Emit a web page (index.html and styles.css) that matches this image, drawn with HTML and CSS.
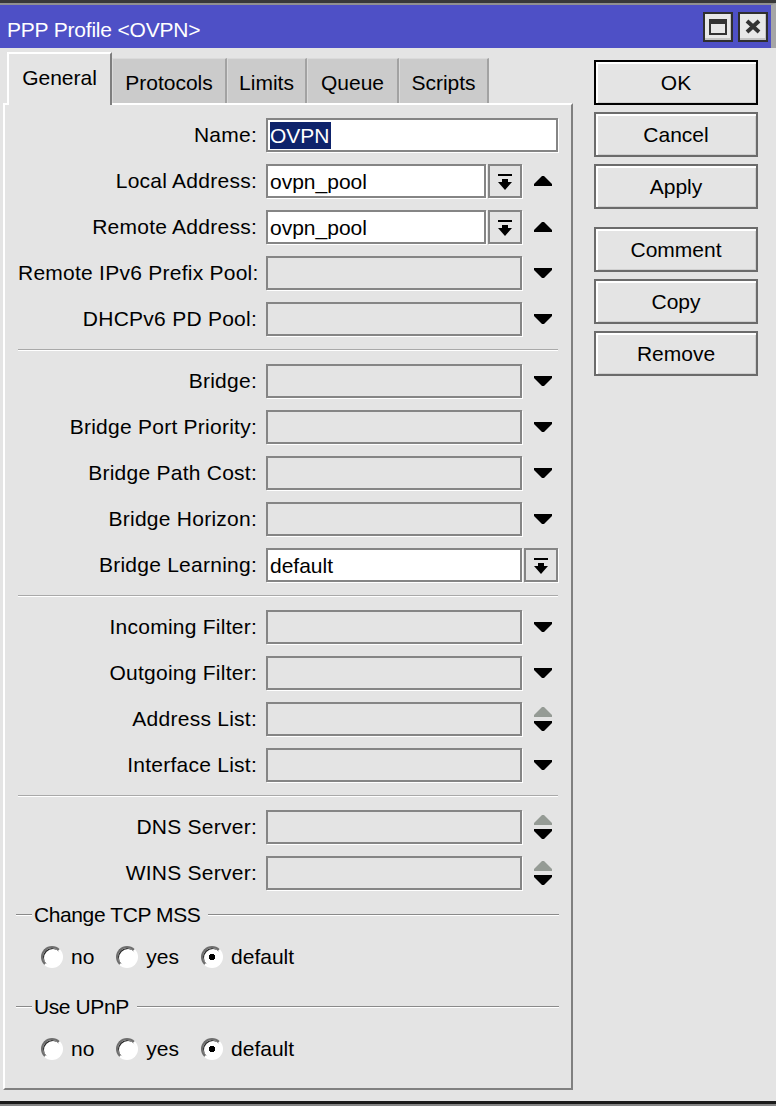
FILE: index.html
```html
<!DOCTYPE html>
<html>
<head>
	<meta charset="utf-8">
	<title>PPP Profile &lt;OVPN&gt;</title>
	<link rel="stylesheet" href="styles.css">
</head>
<body>
<div class="window">
	<div class="titlebar">
		<span class="title">PPP Profile &lt;OVPN&gt;</span>
		<div class="winbtns">
			<span class="winbtn">
				<svg width="18" height="16" viewBox="0 0 18 16"><rect x="1" y="2" width="16" height="13" fill="none" stroke="#333" stroke-width="2"/><rect width="18" height="5" fill="#333"/></svg>
			</span>
			<span class="winbtn">
				<svg width="16" height="15" viewBox="0 0 16 15"><path d="M2 2L14 13M14 2L2 13" stroke="#333" stroke-width="4"/></svg>
			</span>
		</div>
	</div>

	<div class="main">
		<div class="left">
			<div class="tabs">
				<div class="tab active">General</div>
				<div class="tab protocols">Protocols</div>
				<div class="tab limits">Limits</div>
				<div class="tab queue">Queue</div>
				<div class="tab scripts">Scripts</div>
			</div>

			<div class="panel">
				<div class="row">
					<span class="lbl">Name:</span>
					<div class="field on full"><span class="sel">OVPN</span></div>
				</div>
				<div class="row">
					<span class="lbl">Local Address:</span>
					<div class="field on short">ovpn_pool</div>
					<span class="dd"><svg width="14" height="16" viewBox="0 0 14 16"><rect width="14" height="2"/><path d="M4 5h6v3h4l-7 8-7-8h4z"/></svg></span>
					<span class="arrow"><svg width="18" height="10" viewBox="0 0 18 10"><path d="M8 0H10L18 8V10H0V8Z"/></svg></span>
				</div>
				<div class="row">
					<span class="lbl">Remote Address:</span>
					<div class="field on short">ovpn_pool</div>
					<span class="dd"><svg width="14" height="16" viewBox="0 0 14 16"><rect width="14" height="2"/><path d="M4 5h6v3h4l-7 8-7-8h4z"/></svg></span>
					<span class="arrow"><svg width="18" height="10" viewBox="0 0 18 10"><path d="M8 0H10L18 8V10H0V8Z"/></svg></span>
				</div>
				<div class="row">
					<span class="lbl">Remote IPv6 Prefix Pool:</span>
					<div class="field"></div>
					<span class="arrow"><svg width="18" height="10" viewBox="0 0 18 10"><path d="M0 0H18V2L10 10H8L0 2Z"/></svg></span>
				</div>
				<div class="row">
					<span class="lbl">DHCPv6 PD Pool:</span>
					<div class="field"></div>
					<span class="arrow"><svg width="18" height="10" viewBox="0 0 18 10"><path d="M0 0H18V2L10 10H8L0 2Z"/></svg></span>
				</div>

				<div class="sep"></div>

				<div class="row">
					<span class="lbl">Bridge:</span>
					<div class="field"></div>
					<span class="arrow"><svg width="18" height="10" viewBox="0 0 18 10"><path d="M0 0H18V2L10 10H8L0 2Z"/></svg></span>
				</div>
				<div class="row">
					<span class="lbl">Bridge Port Priority:</span>
					<div class="field"></div>
					<span class="arrow"><svg width="18" height="10" viewBox="0 0 18 10"><path d="M0 0H18V2L10 10H8L0 2Z"/></svg></span>
				</div>
				<div class="row">
					<span class="lbl">Bridge Path Cost:</span>
					<div class="field"></div>
					<span class="arrow"><svg width="18" height="10" viewBox="0 0 18 10"><path d="M0 0H18V2L10 10H8L0 2Z"/></svg></span>
				</div>
				<div class="row">
					<span class="lbl">Bridge Horizon:</span>
					<div class="field"></div>
					<span class="arrow"><svg width="18" height="10" viewBox="0 0 18 10"><path d="M0 0H18V2L10 10H8L0 2Z"/></svg></span>
				</div>
				<div class="row">
					<span class="lbl">Bridge Learning:</span>
					<div class="field on">default</div>
					<span class="dd"><svg width="14" height="16" viewBox="0 0 14 16"><rect width="14" height="2"/><path d="M4 5h6v3h4l-7 8-7-8h4z"/></svg></span>
				</div>

				<div class="sep"></div>

				<div class="row">
					<span class="lbl">Incoming Filter:</span>
					<div class="field"></div>
					<span class="arrow"><svg width="18" height="10" viewBox="0 0 18 10"><path d="M0 0H18V2L10 10H8L0 2Z"/></svg></span>
				</div>
				<div class="row">
					<span class="lbl">Outgoing Filter:</span>
					<div class="field"></div>
					<span class="arrow"><svg width="18" height="10" viewBox="0 0 18 10"><path d="M0 0H18V2L10 10H8L0 2Z"/></svg></span>
				</div>
				<div class="row">
					<span class="lbl">Address List:</span>
					<div class="field"></div>
					<span class="arrow"><svg width="18" height="24" viewBox="0 0 18 24"><path fill="#959b95" d="M8 0H10L18 8V10H0V8Z"/><path d="M0 14H18V16L10 24H8L0 16Z"/></svg></span>
				</div>
				<div class="row">
					<span class="lbl">Interface List:</span>
					<div class="field"></div>
					<span class="arrow"><svg width="18" height="10" viewBox="0 0 18 10"><path d="M0 0H18V2L10 10H8L0 2Z"/></svg></span>
				</div>

				<div class="sep"></div>

				<div class="row">
					<span class="lbl">DNS Server:</span>
					<div class="field"></div>
					<span class="arrow"><svg width="18" height="24" viewBox="0 0 18 24"><path fill="#959b95" d="M8 0H10L18 8V10H0V8Z"/><path d="M0 14H18V16L10 24H8L0 16Z"/></svg></span>
				</div>
				<div class="row">
					<span class="lbl">WINS Server:</span>
					<div class="field"></div>
					<span class="arrow"><svg width="18" height="24" viewBox="0 0 18 24"><path fill="#959b95" d="M8 0H10L18 8V10H0V8Z"/><path d="M0 14H18V16L10 24H8L0 16Z"/></svg></span>
				</div>

				<div class="group">
					<div class="group-head">Change TCP MSS</div>
					<div class="radios">
						<span class="radio"><span class="circle"></span>no</span>
						<span class="radio"><span class="circle"></span>yes</span>
						<span class="radio"><span class="circle checked"></span>default</span>
					</div>
				</div>
				<div class="group">
					<div class="group-head">Use UPnP</div>
					<div class="radios">
						<span class="radio"><span class="circle"></span>no</span>
						<span class="radio"><span class="circle"></span>yes</span>
						<span class="radio"><span class="circle checked"></span>default</span>
					</div>
				</div>
			</div>
		</div>

		<div class="buttons">
			<div class="btn default">OK</div>
			<div class="btn">Cancel</div>
			<div class="btn spaced">Apply</div>
			<div class="btn">Comment</div>
			<div class="btn">Copy</div>
			<div class="btn">Remove</div>
		</div>
	</div>
</div>
</body>
</html>
```

FILE: styles.css
```css
body {
	margin: 0;
	background: #858585;
	font-family: "Liberation Sans", Arial, sans-serif;
	font-size: 21px;
	color: #000;
}

.window {
	width: 776px;
	height: 1104px;
	box-sizing: border-box;
	background: #e4e4e4;
	border-top: 3px solid #383838;
	border-bottom: 3px solid #1b1b1b;
	display: flex;
	flex-direction: column;
}

/* title bar */
.titlebar {
	height: 43px;
	border-top: 2px solid #909090;
	border-right: 5px solid #a6a6a6;
	background: #4e50c6;
	display: flex;
	align-items: center;
	justify-content: space-between;
	padding: 0 3px 0 7px;
}
.title {
	color: #fff;
	margin-top: 7px;
	letter-spacing: -0.2px;
	white-space: nowrap;
}
.winbtns {
	display: flex;
	gap: 5px;
}
.winbtn {
	width: 30px;
	height: 30px;
	box-sizing: border-box;
	border: 2px solid #2f2f2f;
	background: #e8e8e8;
	box-shadow: inset -1px -2px 0 #c4c4c4;
	display: flex;
	align-items: center;
	justify-content: center;
}

.main {
	flex: 1;
	display: flex;
	padding: 4px 0 0 3px;
}
.left {
	width: 570px;
}

/* tabs */
.tabs {
	display: flex;
	align-items: flex-end;
	padding-left: 4px;
}
.tab {
	height: 45px;
	box-sizing: border-box;
	background: #cbcbcb;
	border-top: 1px solid #dadada;
	border-left: 1px solid #dadada;
	border-right: 2px solid #a2a2a2;
	display: flex;
	align-items: center;
	justify-content: center;
	padding-top: 3px;
	white-space: nowrap;
}
.tab.active {
	width: 105px;
	height: 53px;
	margin-bottom: -2px;
	position: relative;
	background: #e4e4e4;
	border-top: 2px solid #fff;
	border-left: 2px solid #fff;
	border-right: 2px solid #7e7e7e;
	padding: 0 0 4px;
}
.tab.protocols { width: 115px; }
.tab.limits { width: 80px; }
.tab.queue { width: 92px; }
.tab.scripts { width: 90px; }

/* panel */
.panel {
	box-sizing: border-box;
	width: 570px;
	border: 2px solid;
	border-color: #fff #808080 #808080 #fff;
	padding: 13px 13px 27px 13px;
	display: flex;
	flex-direction: column;
	gap: 12px;
}

.row {
	display: flex;
	align-items: center;
	height: 34px;
}
.lbl {
	width: 239px;
	margin-right: 9px;
	text-align: right;
	letter-spacing: 0.25px;
	white-space: nowrap;
}
.field {
	width: 256px;
	height: 34px;
	box-sizing: border-box;
	border: 2px solid #858585;
	box-shadow: 1px 1px 0 #fff;
	background: #e4e4e4;
	padding-left: 2px;
	line-height: 31px;
	white-space: nowrap;
	overflow: hidden;
}
.field.on {
	background: #fff;
}
.field.full {
	width: 292px;
	display: flex;
	align-items: center;
}
.field.short {
	width: 220px;
}
.sel {
	background: #0e236b;
	color: #fff;
	line-height: 26px;
	padding: 1px 1px 0 0;
}
.dd {
	width: 34px;
	height: 34px;
	box-sizing: border-box;
	margin-left: 2px;
	border: 2px solid #858585;
	box-shadow: 1px 1px 0 #fff;
	display: flex;
	align-items: center;
	justify-content: center;
	padding-top: 2px;
}
.arrow {
	width: 18px;
	margin-left: 12px;
	display: flex;
}

.sep {
	border-top: 1px solid #a9a9a9;
	border-bottom: 1px solid #fff;
	margin: 1px 0;
}

/* radio groups */
.group + .group {
	margin-top: 13px;
}
.group-head {
	height: 26px;
	display: flex;
	align-items: center;
	margin: 0 -1px 0 -2px;
	letter-spacing: -0.4px;
	white-space: nowrap;
}
.group-head::before,
.group-head::after {
	content: "";
	border-top: 1px solid #8a8a8a;
	border-bottom: 1px solid #fff;
}
.group-head::before {
	width: 16px;
	margin-right: 2px;
}
.group-head::after {
	flex: 1;
	margin-left: 8px;
}
.radios {
	height: 24px;
	margin-top: 17px;
	padding-left: 23px;
	display: flex;
	align-items: center;
}
.radio {
	display: flex;
	align-items: center;
	margin-right: 22px;
}
.circle {
	width: 22px;
	height: 22px;
	box-sizing: border-box;
	border-radius: 50%;
	border: 2px solid;
	border-color: #6e6e6e #fff #fff #6e6e6e;
	box-shadow: inset 1px 1px 0 #2a2a2a;
	background: #fff;
	margin-right: 8px;
}
.circle.checked {
	background: radial-gradient(circle, #000 0 3px, #fff 3.5px);
}

/* buttons */
.buttons {
	width: 164px;
	margin-left: 21px;
	padding-top: 8px;
	display: flex;
	flex-direction: column;
	gap: 7px;
}
.btn {
	height: 45px;
	box-sizing: border-box;
	border: 2px solid #6b6b6b;
	box-shadow: inset 2px 2px 0 #fff, inset -1px -1px 0 #cfcfcf;
	display: flex;
	align-items: center;
	justify-content: center;
	padding-top: 1px;
}
.btn.default {
	border-color: #000;
}
.btn.spaced {
	margin-bottom: 11px;
}
```
